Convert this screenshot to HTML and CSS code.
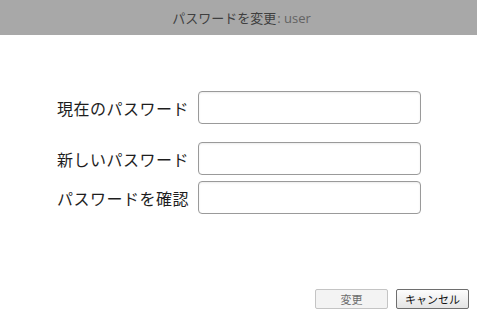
FILE: index.html
```html
<!DOCTYPE html>
<html lang="ja">

<head>
    <meta charset="UTF-8" />
    <title>パスワードを変更</title>
    <link rel="stylesheet" href="styles.css">
</head>

<body>
    <div class="dialog">
        <div class="title-bar">パスワードを変更<span class="user">: user</span></div>

        <form class="pw-form">
            <div class="row">
                <label for="current">現在のパスワード</label>
                <input type="password" id="current" />
            </div>
            <div class="row row-new">
                <label for="newpw">新しいパスワード</label>
                <input type="password" id="newpw" />
            </div>
            <div class="row row-confirm">
                <label for="confirm">パスワードを確認</label>
                <input type="password" id="confirm" />
            </div>
        </form>

        <div class="buttons">
            <button class="btn" disabled>変更</button>
            <button class="btn btn-cancel">キャンセル</button>
        </div>
    </div>
</body>

</html>
```

FILE: styles.css
```css
* {
    margin: 0;
    padding: 0;
    box-sizing: border-box;
}

body {
    width: 477px;
    height: 317px;
    background: #ffffff;
    font-family: "Noto Sans CJK JP", "Noto Sans", sans-serif;
    color: #222;
    overflow: hidden;
}

.dialog {
    height: 100%;
    display: flex;
    flex-direction: column;
}

.title-bar {
    height: 35px;
    background: #a8a8a8;
    color: #3f3f3f;
    font-size: 13px;
    line-height: 35px;
    text-align: center;
    padding-left: 6px;
}

.title-bar .user {
    color: #636363;
    font-family: "Open Sans", "Noto Sans", sans-serif;
    margin-left: 1px;
}

.pw-form {
    padding: 56px 0 0 57px;
}

.row {
    display: flex;
    align-items: center;
    height: 33px;
}

.row-new {
    margin-top: 18px;
}

.row-confirm {
    margin-top: 6px;
}

.row label {
    width: 141px;
    font-size: 16px;
    color: #1e1e1e;
    letter-spacing: 0.5px;
}

.row input {
    width: 223px;
    height: 33px;
    border: 1px solid #9a9a9a;
    border-radius: 4px;
    background: #fff;
    box-shadow: inset 0 1px 2px rgba(0, 0, 0, 0.08);
}

.row input:focus {
    outline: none;
    border-color: #6a8fc7;
}

.buttons {
    margin-top: auto;
    display: flex;
    justify-content: flex-end;
    gap: 8px;
    padding: 0 8px 8px 0;
}

.btn {
    width: 73px;
    height: 20px;
    font-family: "Noto Sans CJK JP", sans-serif;
    font-size: 11px;
    border-radius: 2px;
    border: 1px solid #c4c4c4;
    background: #f3f3f3;
    color: #6c6c6c;
}

.btn-cancel {
    border: 1px solid #6e6e6e;
    background: linear-gradient(#fdfdfd, #e4e4e4);
    color: #111;
    cursor: pointer;
}

.btn-cancel:hover {
    background: linear-gradient(#ffffff, #d8d8d8);
}
```
